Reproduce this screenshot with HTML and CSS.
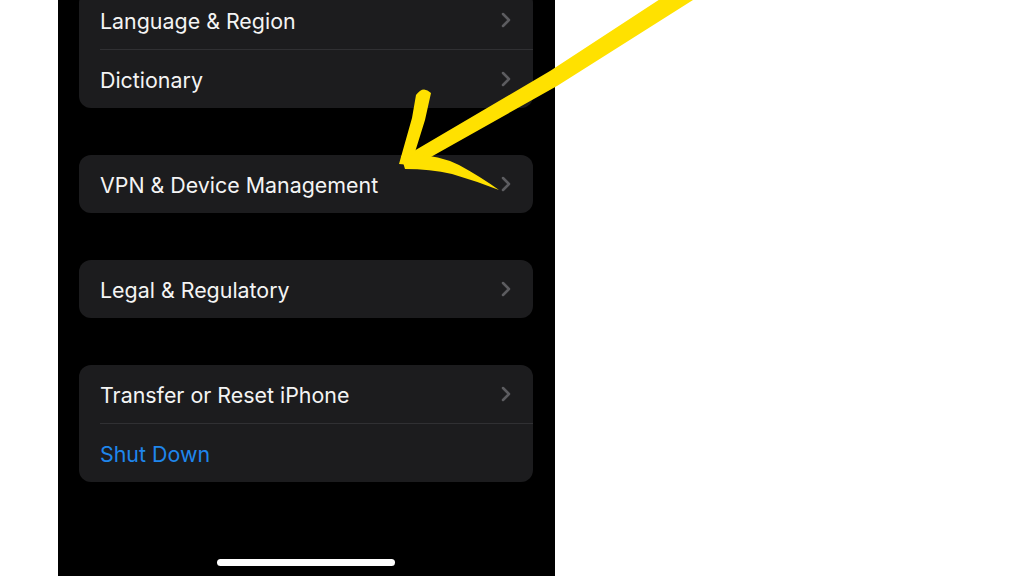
FILE: index.html
```html
<!DOCTYPE html>
<html lang="en">
<head>
<meta charset="utf-8">
<title>Settings - General</title>
<link rel="stylesheet" href="styles.css">
</head>
<body>
<div class="page">
  <div class="screen">
    <div class="card card-first">
      <div class="row">
        <div class="row-body"><span class="label">Language &amp; Region</span><svg class="chev" viewBox="0 0 10 16"><path d="M2 2 L8 8 L2 14"/></svg></div>
      </div>
      <div class="row">
        <div class="row-body sep"><span class="label">Dictionary</span><svg class="chev" viewBox="0 0 10 16"><path d="M2 2 L8 8 L2 14"/></svg></div>
      </div>
    </div>
    <div class="card">
      <div class="row">
        <div class="row-body"><span class="label">VPN &amp; Device Management</span><svg class="chev" viewBox="0 0 10 16"><path d="M2 2 L8 8 L2 14"/></svg></div>
      </div>
    </div>
    <div class="card">
      <div class="row">
        <div class="row-body"><span class="label">Legal &amp; Regulatory</span><svg class="chev" viewBox="0 0 10 16"><path d="M2 2 L8 8 L2 14"/></svg></div>
      </div>
    </div>
    <div class="card">
      <div class="row">
        <div class="row-body"><span class="label">Transfer or Reset iPhone</span><svg class="chev" viewBox="0 0 10 16"><path d="M2 2 L8 8 L2 14"/></svg></div>
      </div>
      <div class="row">
        <div class="row-body sep"><span class="label label-blue">Shut Down</span></div>
      </div>
    </div>
    <div class="home-indicator"></div>
  </div>
  <svg class="arrow" viewBox="0 0 1024 576" width="1024" height="576">
    <path d="M677 -12 L693 0 L557 86 L413 167 L402 158 L550 71 Z"/>
    <path d="M416 95 Q423 85 431 93 L425 120 L411 165 L399 164 L412 118 Z"/>
    <path d="M401 156 Q432 152 459 165 Q481 177 499 190 Q476 181 452 174 Q430 169 405 169 Z"/>
  </svg>
</div>
</body>
</html>
```
FILE: styles.css
```css
html, body {
  margin: 0;
  padding: 0;
  background: #ffffff;
}
.page {
  position: relative;
  width: 1024px;
  height: 576px;
  overflow: hidden;
  background: #ffffff;
}
.screen {
  margin-left: 58px;
  width: 497px;
  height: 576px;
  box-sizing: border-box;
  padding: 0 22px 0 21px;
  background: #000000;
  display: flex;
  flex-direction: column;
  gap: 47px;
  font-family: Inter, "Liberation Sans", sans-serif;
}
.card {
  background: #1c1c1e;
  border-radius: 12px;
  display: flex;
  flex-direction: column;
}
.card-first {
  margin-top: -9px;
}
.row {
  padding-left: 21px;
  display: flex;
}
.row-body {
  flex: 1;
  height: 58px;
  display: flex;
  align-items: center;
  justify-content: space-between;
  padding-right: 22px;
}
.row-body.sep {
  border-top: 1px solid #303033;
}
.label {
  color: #f4f4f4;
  font-size: 21.4px;
  padding-top: 2px;
}
.label-blue {
  color: #1f86ec;
}
.chev {
  width: 10px;
  height: 16px;
  fill: none;
  stroke: #5c5c60;
  stroke-width: 2.5;
  stroke-linecap: round;
  stroke-linejoin: round;
}
.home-indicator {
  margin-top: auto;
  margin-bottom: 10px;
  align-self: center;
  width: 178px;
  height: 7px;
  border-radius: 4px;
  background: #ffffff;
}
.arrow {
  position: absolute;
  left: 0;
  top: 0;
  pointer-events: none;
  fill: #ffe100;
}
```
